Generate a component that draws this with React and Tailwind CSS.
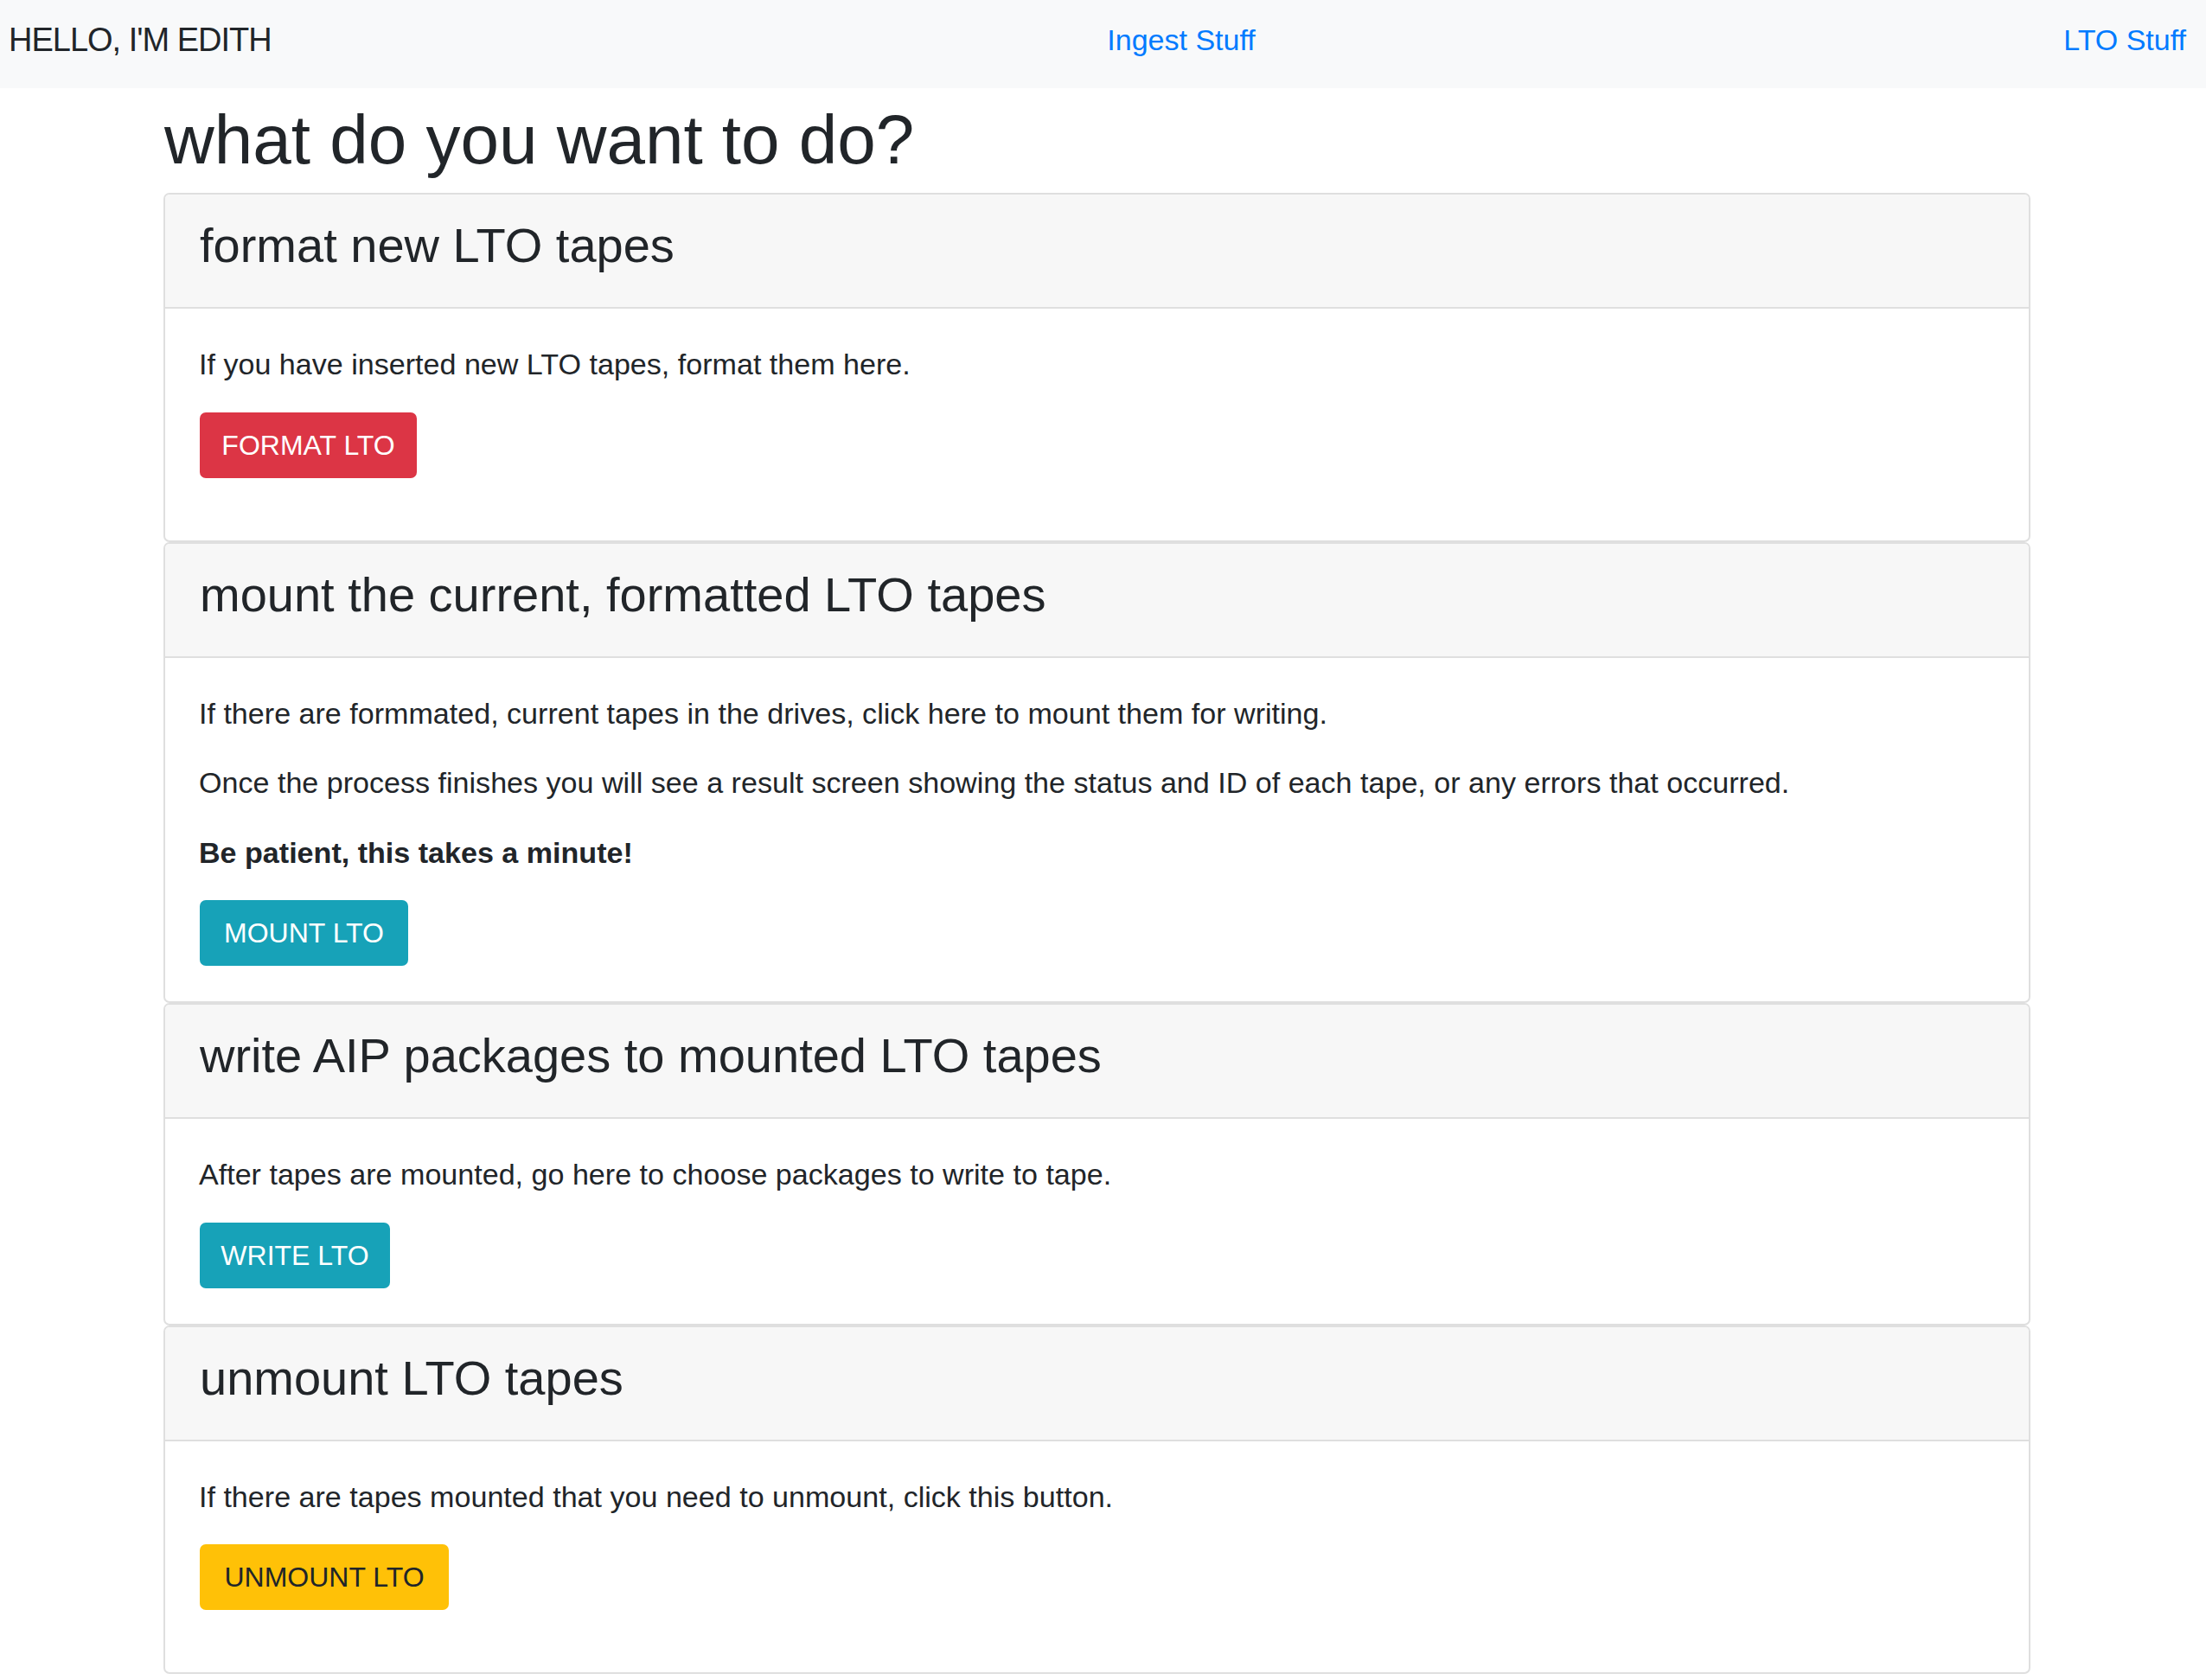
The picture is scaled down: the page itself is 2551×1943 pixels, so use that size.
import React from 'react'

const cards = [
  {
    title: 'format new LTO tapes',
    paras: [{ text: 'If you have inserted new LTO tapes, format them here.' }],
    button: { label: 'FORMAT LTO', cls: 'bg-[#dc3545] text-white w-[251px]' },
    pb: 'pb-[72px]',
  },
  {
    title: 'mount the current, formatted LTO tapes',
    paras: [
      { text: 'If there are formmated, current tapes in the drives, click here to mount them for writing.' },
      { text: 'Once the process finishes you will see a result screen showing the status and ID of each tape, or any errors that occurred.' },
      { text: 'Be patient, this takes a minute!', bold: true },
    ],
    button: { label: 'MOUNT LTO', cls: 'bg-[#17a2b8] text-white w-[241px]' },
    pb: 'pb-[41px]',
  },
  {
    title: 'write AIP packages to mounted LTO tapes',
    paras: [{ text: 'After tapes are mounted, go here to choose packages to write to tape.' }],
    button: { label: 'WRITE LTO', cls: 'bg-[#17a2b8] text-white w-[220px]' },
    pb: 'pb-[41px]',
  },
  {
    title: 'unmount LTO tapes',
    paras: [{ text: 'If there are tapes mounted that you need to unmount, click this button.' }],
    button: { label: 'UNMOUNT LTO', cls: 'bg-[#ffc107] text-[#212529] w-[288px]' },
    pb: 'pb-[72px]',
  },
]

function Card({ card }) {
  return (
    <div className="border-2 border-[#dfdfdf] rounded-[7px] overflow-hidden bg-white">
      <div className="bg-[#f7f7f7] border-b-2 border-[#dfdfdf] pl-[40px] pr-[39px] pt-[26px] pb-[38px]">
        <h3 className="text-[56px] leading-[66px] font-normal">{card.title}</h3>
      </div>
      <div className={`pl-[39px] pr-[39px] pt-[39px] ${card.pb}`}>
        {card.paras.map((p, i) => (
          <p key={i} className={`text-[34.1px] leading-[50.5px] mb-[30px] ${p.bold ? 'font-bold' : ''}`}>
            {p.text}
          </p>
        ))}
        <button
          className={`h-[76px] rounded-[7px] flex items-center justify-center text-[32px] ml-[1px] ${card.button.cls}`}
        >
          {card.button.label}
        </button>
      </div>
    </div>
  )
}

export default function App() {
  return (
    <div className="min-h-screen bg-white text-[#212529] font-['Liberation_Sans',Arial,sans-serif]">
      <nav className="h-[102px] bg-[#f8f9fa] flex items-center justify-between pl-[10px] pr-[23px] pb-[9px]">
        <a className="text-[38px] tracking-[-1px] text-[#212529]">HELLO, I'M EDITH</a>
        <a className="text-[34px] text-[#007bff] ml-[32px]">Ingest Stuff</a>
        <a className="text-[34px] text-[#007bff]">LTO Stuff</a>
      </nav>
      <div className="ml-[189px] w-[2159px]">
        <h1 className="text-[80px] leading-[95px] font-normal mt-[12px] mb-[14px] ml-[1px]">what do you want to do?</h1>
        <div className="flex flex-col">
          {cards.map((c) => (
            <Card key={c.title} card={c} />
          ))}
        </div>
      </div>
    </div>
  )
}
